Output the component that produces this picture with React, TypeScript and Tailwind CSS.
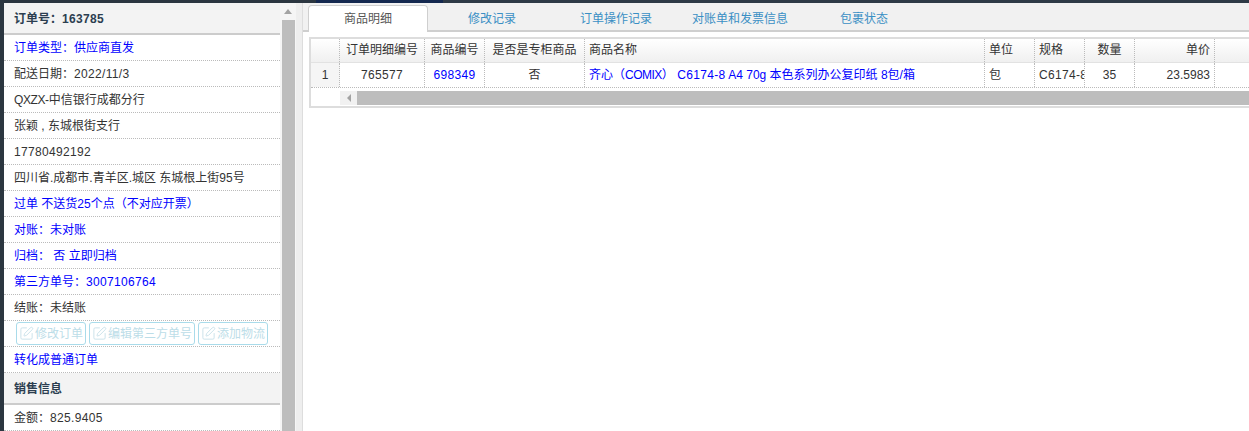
import React from "react";
import { SquarePen } from "lucide-react";

const FONT = "[font-family:'Liberation_Sans','Noto_Sans_CJK_SC',sans-serif]";

function N({ children }: { children: React.ReactNode }) {
  return <span className="tracking-[0.33px]">{children}</span>;
}

type Row = { text: React.ReactNode; blue?: boolean };
const rows: Row[] = [
  { text: "订单类型：供应商直发", blue: true },
  { text: <>配送日期：<N>2022/11/3</N></> },
  { text: <><span className="tracking-[-0.4px]">QXZX-</span>中信银行成都分行</> },
  { text: "张颖 , 东城根街支行" },
  { text: <N>17780492192</N> },
  { text: "四川省.成都市.青羊区.城区 东城根上街95号" },
  { text: "过单 不送货25个点（不对应开票）", blue: true },
  { text: "对账：未对账", blue: true },
  { text: "归档： 否 立即归档", blue: true },
  { text: <>第三方单号：<N>3007106764</N></>, blue: true },
  { text: "结账：未结账" },
];

function InfoRow({ text, blue }: Row) {
  return (
    <div
      className={`h-[26px] leading-[27px] px-[10px] border-b border-dotted border-[#bbbbbb] whitespace-nowrap ${blue ? "text-[#0000ff]" : "text-[#333333]"}`}
    >
      {text}
    </div>
  );
}

function GhostButton({ label, className }: { label: string; className: string }) {
  return (
    <div
      className={`h-[23px] flex items-center justify-center gap-[1px] rounded-[3px] border border-[#a9dbea] text-[#bcdde8] ${className}`}
    >
      <SquarePen size={15} strokeWidth={1.4} className="text-[#c5dfe8]" />
      <span>{label}</span>
    </div>
  );
}

function SectionHead({ children, className }: { children: React.ReactNode; className: string }) {
  return (
    <div className={`bg-[#f3f3f3] px-[10px] font-bold text-[#2c3e50] border-b-2 border-[#cccccc] ${className}`}>
      {children}
    </div>
  );
}

const cols: { w: string; head: string; cell: React.ReactNode; align: string; blue?: boolean }[] = [
  { w: "w-[85px]", head: "订单明细编号", cell: <N>765577</N>, align: "text-center" },
  { w: "w-[60px]", head: "商品编号", cell: <N>698349</N>, align: "text-center", blue: true },
  { w: "w-[100px]", head: "是否是专柜商品", cell: "否", align: "text-center" },
  {
    w: "w-[400px]",
    head: "商品名称",
    cell: (
      <>
        齐心（<span className="tracking-[-0.5px]">COMIX</span>） <N>C6174-8</N> A4 70g 本色系列办公复印纸 8包/箱
      </>
    ),
    align: "text-left",
    blue: true,
  },
  { w: "w-[50px]", head: "单位", cell: "包", align: "text-left" },
  { w: "w-[50px]", head: "规格", cell: <N>C6174-8</N>, align: "text-left" },
  { w: "w-[50px]", head: "数量", cell: "35", align: "text-center" },
  { w: "w-[80px]", head: "单价", cell: "23.5983", align: "text-right" },
];

const tabs = ["修改记录", "订单操作记录", "对账单和发票信息", "包裹状态"];

export default function App() {
  return (
    <div className={`${FONT} text-[12px] w-[1249px] h-[431px] overflow-hidden bg-white flex flex-col`}>
      <div className="h-[3px] shrink-0 flex bg-[#2e3a46]">
        <div className="w-[316px] bg-[#2b3640]" />
        <div className="w-[127px] bg-[#14284f]" />
      </div>
      <div className="flex-1 flex min-h-0">
        <div className="w-[4px] shrink-0 bg-[#2b3640]" />
        {/* sidebar */}
        <div className="w-[276px] shrink-0">
          <SectionHead className="h-[32px] leading-[32px]">
            订单号：<N>163785</N>
          </SectionHead>
          {rows.map((r, i) => (
            <InfoRow key={i} {...r} />
          ))}
          <div className="h-[26px] border-b border-dotted border-[#bbbbbb] flex items-start gap-[3px] pl-[12px] pt-[1px]">
            <GhostButton label="修改订单" className="w-[70px]" />
            <GhostButton label="编辑第三方单号" className="w-[106px]" />
            <GhostButton label="添加物流" className="w-[70px]" />
          </div>
          <div className="h-[26px] leading-[27px] px-[10px] text-[#0000ff] border-b border-dotted border-[#bbbbbb]">转化成普通订单</div>
          <SectionHead className="h-[32px] leading-[32px]">销售信息</SectionHead>
          <InfoRow text={<>金额：<N>825.9405</N></>} />
        </div>
        {/* sidebar scrollbar */}
        <div className="w-[16px] shrink-0 bg-[#f5f5f5] flex flex-col">
          <div className="h-[17px] flex items-center justify-center">
            <div className="w-0 h-0 border-x-[4px] border-x-transparent border-b-[5px] border-b-[#a3a3a3]" />
          </div>
          <div className="w-[13px] ml-[2px] flex-1 bg-[#bdbdbd]" />
        </div>
        <div className="w-[7px] shrink-0 bg-[#eeeeee] border-r border-[#dddddd]" />
        {/* main */}
        <div className="flex-1 min-w-0 flex flex-col">
          <div className="h-[29px] shrink-0 bg-[#f1f1f1] border-b-2 border-[#cfcfcf] flex items-end pl-[5px] gap-[4px]">
            <div className="w-[120px] h-[27px] -mb-[2px] bg-white border border-b-0 border-[#cfcfcf] rounded-t-[4px] flex items-center justify-center text-[#555555]">
              商品明细
            </div>
            {tabs.map((t) => (
              <div key={t} className="w-[120px] h-[27px] pt-[4px] flex items-center justify-center text-[#3a8fc4]">
                {t}
              </div>
            ))}
          </div>
          {/* table */}
          <div className="mt-[5px] ml-[6px] border-t-2 border-b-2 border-l-2 border-[#dddddd] overflow-hidden h-[71px] text-[#333333]">
            <div className="flex h-[24px] border-b border-[#e2e2e2] bg-gradient-to-b from-white to-[#f0f0f0] whitespace-nowrap">
              <div className="w-[29px] shrink-0 border-r border-dotted border-[#bbbbbb]" />
              {cols.map((c) => (
                <div
                  key={c.head}
                  className={`${c.w} shrink-0 px-[4px] leading-[23px] overflow-hidden border-r border-dotted border-[#bbbbbb] ${c.align}`}
                >
                  {c.head}
                </div>
              ))}
            </div>
            <div className="flex h-[25px] border-b border-dotted border-[#bbbbbb] whitespace-nowrap">
              <div className="w-[29px] shrink-0 bg-[#f5f5f5] border-r border-dotted border-[#bbbbbb] text-center leading-[24px]">1</div>
              {cols.map((c) => (
                <div
                  key={c.head}
                  className={`${c.w} shrink-0 px-[4px] leading-[24px] overflow-hidden border-r border-dotted border-[#bbbbbb] ${c.align} ${c.blue ? "text-[#0000ff]" : ""}`}
                >
                  {c.cell}
                </div>
              ))}
            </div>
            <div className="h-[18px] flex pl-[29px] pt-[3px]">
              <div className="w-[17px] h-[14px] bg-[#f1f1f1] flex items-center justify-center shrink-0">
                <div className="w-0 h-0 border-y-[4px] border-y-transparent border-r-[4px] border-r-[#a3a3a3]" />
              </div>
              <div className="flex-1 h-[14px] bg-[#bdbdbd]" />
            </div>
          </div>
        </div>
      </div>
    </div>
  );
}
